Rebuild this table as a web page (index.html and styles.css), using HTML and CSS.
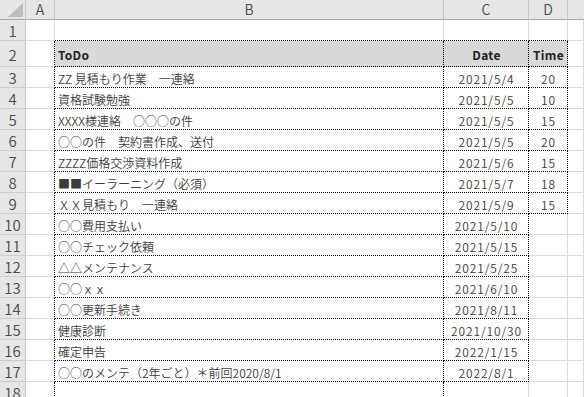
FILE: index.html
```html
<!DOCTYPE html>
<html lang="ja">
<head>
<meta charset="utf-8">
<title>ToDo</title>
<link rel="stylesheet" href="styles.css">
</head>
<body>
<div class="sheet">
  <div class="corner"><svg width="25" height="19" viewBox="0 0 25 19"><polygon points="23,3 23,17 8,17" fill="#bdbdbd"/></svg></div>
  <div class="ch">A</div><div class="ch">B</div><div class="ch">C</div><div class="ch">D</div><div class="ch last"></div>

  <div class="rh">1</div><div class="c"></div><div class="c db"></div><div class="c db"></div><div class="c db"></div><div class="c"></div>

  <div class="rh">2</div><div class="c dr"></div><div class="c dr db hd">ToDo</div><div class="c dr db hd ctr">Date</div><div class="c dr db hd ctr">Time</div><div class="c"></div>

  <div class="rh">3</div><div class="c dr"></div><div class="c dr db">ZZ 見積もり作業　一連絡</div><div class="c dr db ctr num">2021/5/4</div><div class="c dr db ctr num">20</div><div class="c"></div>
  <div class="rh">4</div><div class="c dr"></div><div class="c dr db">資格試験勉強</div><div class="c dr db ctr num">2021/5/5</div><div class="c dr db ctr num">10</div><div class="c"></div>
  <div class="rh">5</div><div class="c dr"></div><div class="c dr db">XXXX様連絡　○○○の件</div><div class="c dr db ctr num">2021/5/5</div><div class="c dr db ctr num">15</div><div class="c"></div>
  <div class="rh">6</div><div class="c dr"></div><div class="c dr db">○○の件　契約書作成、送付</div><div class="c dr db ctr num">2021/5/5</div><div class="c dr db ctr num">20</div><div class="c"></div>
  <div class="rh">7</div><div class="c dr"></div><div class="c dr db">ZZZZ価格交渉資料作成</div><div class="c dr db ctr num">2021/5/6</div><div class="c dr db ctr num">15</div><div class="c"></div>
  <div class="rh">8</div><div class="c dr"></div><div class="c dr db">■■イーラーニング（必須）</div><div class="c dr db ctr num">2021/5/7</div><div class="c dr db ctr num">18</div><div class="c"></div>
  <div class="rh">9</div><div class="c dr"></div><div class="c dr db">ＸＸ見積もり　一連絡</div><div class="c dr db ctr num">2021/5/9</div><div class="c dr db ctr num">15</div><div class="c"></div>
  <div class="rh">10</div><div class="c dr"></div><div class="c dr db">○○費用支払い</div><div class="c dr db ctr num">2021/5/10</div><div class="c"></div><div class="c"></div>
  <div class="rh">11</div><div class="c dr"></div><div class="c dr db">○○チェック依頼</div><div class="c dr db ctr num">2021/5/15</div><div class="c"></div><div class="c"></div>
  <div class="rh">12</div><div class="c dr"></div><div class="c dr db">△△メンテナンス</div><div class="c dr db ctr num">2021/5/25</div><div class="c"></div><div class="c"></div>
  <div class="rh">13</div><div class="c dr"></div><div class="c dr db">○○ｘｘ</div><div class="c dr db ctr num">2021/6/10</div><div class="c"></div><div class="c"></div>
  <div class="rh">14</div><div class="c dr"></div><div class="c dr db">○○更新手続き</div><div class="c dr db ctr num">2021/8/11</div><div class="c"></div><div class="c"></div>
  <div class="rh">15</div><div class="c dr"></div><div class="c dr db">健康診断</div><div class="c dr db ctr num">2021/10/30</div><div class="c"></div><div class="c"></div>
  <div class="rh">16</div><div class="c dr"></div><div class="c dr db">確定申告</div><div class="c dr db ctr num">2022/1/15</div><div class="c"></div><div class="c"></div>
  <div class="rh">17</div><div class="c dr"></div><div class="c dr db">○○のメンテ（2年ごと）＊前回2020/8/1</div><div class="c dr db ctr num">2022/8/1</div><div class="c"></div><div class="c"></div>
  <div class="rh">18</div><div class="c dr"></div><div class="c dr"></div><div class="c"></div><div class="c"></div><div class="c"></div>
</div>
</body>
</html>
```
FILE: styles.css
```css
html, body {
  margin: 0;
  padding: 0;
  background: #ffffff;
}
body {
  width: 584px;
  height: 397px;
  overflow: hidden;
}
.sheet {
  display: grid;
  grid-template-columns: 26px 29px 389px 85px 39px 16px;
  grid-template-rows: 20px 21px 26px repeat(15, 21px) 20px;
  width: 584px;
  height: 397px;
  font-family: "Noto Sans CJK JP", "Noto Sans", sans-serif;
}
.corner {
  background: #e6e6e6;
  border-right: 1px solid #c8c8c8;
  border-bottom: 1px solid #a6a6a6;
  box-sizing: border-box;
  display: flex;
}
.ch {
  background: #e6e6e6;
  border-right: 1px solid #c8c8c8;
  border-bottom: 1px solid #a6a6a6;
  box-sizing: border-box;
  color: #4a4a4a;
  font-size: 14px;
  font-weight: 350;
  line-height: 18px;
  text-align: center;
}
.ch.last { border-right: none; }
.rh {
  background: #e6e6e6;
  border-right: 1px solid #c8c8c8;
  border-bottom: 1px solid #cdcdcd;
  box-sizing: border-box;
  color: #4a4a4a;
  font-size: 15px;
  font-weight: 350;
  display: flex;
  align-items: center;
  justify-content: center;
  padding-top: 1px;
}
.c {
  border-right: 1px solid #dadada;
  border-bottom: 1px solid #dadada;
  box-sizing: border-box;
  color: #3c3c3c;
  font-size: 12px;
  font-weight: 350;
  padding: 2px 2px 0 3px;
  display: flex;
  align-items: center;
  white-space: nowrap;
  overflow: hidden;
}
.dr { border-right: 1px dotted #000; }
.db { border-bottom: 1px dotted #000; }
.hd {
  background: #d9d9d9;
  font-weight: bold;
  color: #222;
  letter-spacing: 0.3px;
}
.ctr { justify-content: center; }
.num { letter-spacing: 0.9px; }
```
